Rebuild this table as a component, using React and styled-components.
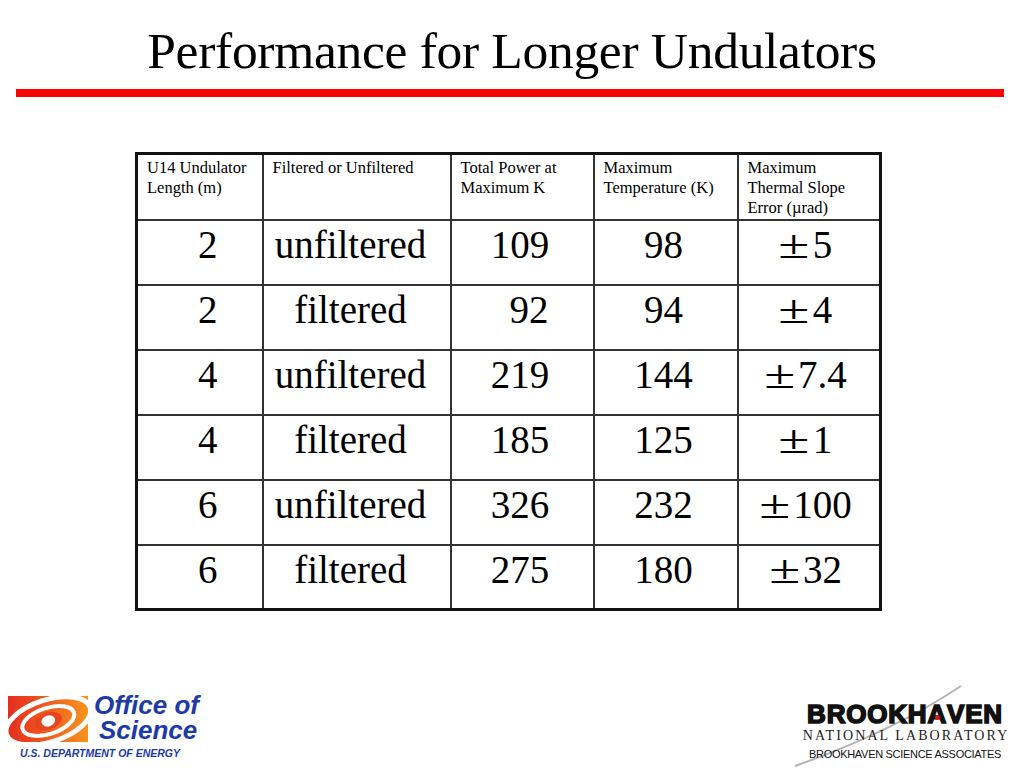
import React from "react";
import styled, { createGlobalStyle } from "styled-components";

const rows = [
  { len: "2", kind: "unfiltered", power: "109", temp: "98", slope: "5" },
  { len: "2", kind: "filtered", power: "92", temp: "94", slope: "4", pad: true },
  { len: "4", kind: "unfiltered", power: "219", temp: "144", slope: "7.4" },
  { len: "4", kind: "filtered", power: "185", temp: "125", slope: "1" },
  { len: "6", kind: "unfiltered", power: "326", temp: "232", slope: "100" },
  { len: "6", kind: "filtered", power: "275", temp: "180", slope: "32" },
];

const GlobalStyle = createGlobalStyle`
  html, body {
    margin: 0;
    padding: 0;
    background: #fff;
  }
  body {
    font-family: "Liberation Serif", "Times New Roman", serif;
    color: #000;
  }
`;

function DoeLogo() {
  return (
    <svg width="80" height="46" viewBox="0 0 80 46">
      <defs>
        <linearGradient id="doeGrad" x1="0" y1="0" x2="1" y2="0">
          <stop offset="0" stopColor="#e42d1f" />
          <stop offset="0.55" stopColor="#f0621e" />
          <stop offset="1" stopColor="#f7941d" />
        </linearGradient>
        <clipPath id="doeClip">
          <rect x="0" y="0" width="80" height="46" />
        </clipPath>
      </defs>
      <rect x="0" y="0" width="80" height="46" fill="url(#doeGrad)" />
      <g clipPath="url(#doeClip)">
        <g transform="rotate(-18 40 24)">
          <ellipse cx="40" cy="25" rx="44" ry="21" fill="none" stroke="#fff" strokeWidth="5" />
          <ellipse cx="40" cy="25" rx="27" ry="13" fill="none" stroke="#fff" strokeWidth="4" />
          <ellipse cx="40" cy="25" rx="14" ry="8.5" fill="#e8451f" />
          <ellipse cx="40" cy="25" rx="7" ry="5.5" fill="#fff" />
        </g>
      </g>
    </svg>
  );
}

function App() {
  return (
    <>
      <GlobalStyle />
      <Slide>
        <Title>Performance for Longer Undulators</Title>
        <Rule />
        <TableWrap>
          <DataTable>
            <colgroup>
              <col style={{ width: 126 }} />
              <col style={{ width: 188 }} />
              <col style={{ width: 143 }} />
              <col style={{ width: 144 }} />
              <col style={{ width: 143 }} />
            </colgroup>
            <thead>
              <tr>
                <HeadCell>U14 Undulator<br />Length (m)</HeadCell>
                <HeadCell>Filtered or Unfiltered</HeadCell>
                <HeadCell>Total Power at<br />Maximum K</HeadCell>
                <HeadCell>Maximum<br />Temperature (K)</HeadCell>
                <HeadCell>Maximum<br />Thermal Slope<br />Error (µrad)</HeadCell>
              </tr>
            </thead>
            <tbody>
              {rows.map((r, i) => (
                <tr key={i}>
                  <Cell $shift={8}>{r.len}</Cell>
                  <Cell $shift={-6}>{r.kind}</Cell>
                  <Cell $shift={r.pad ? 7 : -2}>{r.power}</Cell>
                  <Cell $shift={-2}>{r.temp}</Cell>
                  <Cell $shift={-3}>
                    <PlusMinus>±</PlusMinus>
                    {r.slope}
                  </Cell>
                </tr>
              ))}
            </tbody>
          </DataTable>
        </TableWrap>
        <Footer>
          <DoeBlock>
            <DoeTop>
              <DoeLogo />
              <DoeName>
                <span>Office of</span>
                <span>Science</span>
              </DoeName>
            </DoeTop>
            <DoeDept>U.S. DEPARTMENT OF ENERGY</DoeDept>
          </DoeBlock>
          <BnlBlock>
            <Swoosh width="220" height="84" viewBox="0 0 220 84">
              <path d="M1 82 Q 100 47 167 2" fill="none" stroke="#b3b3b3" strokeWidth="2" />
            </Swoosh>
            <BnlName>
              BROOKH<RedA>A<RedDot /></RedA>VEN
            </BnlName>
            <BnlLab>NATIONAL LABORATORY</BnlLab>
            <BnlAssoc>BROOKHAVEN SCIENCE ASSOCIATES</BnlAssoc>
          </BnlBlock>
        </Footer>
      </Slide>
    </>
  );
}

const Slide = styled.div`
  width: 1024px;
  height: 768px;
  display: flex;
  flex-direction: column;
  overflow: hidden;
`;

const Title = styled.h1`
  margin: 21px 0 0;
  height: 60px;
  font-family: "Liberation Serif", "Times New Roman", serif;
  font-weight: normal;
  font-size: 51.5px;
  line-height: 60px;
  letter-spacing: -0.3px;
  text-align: center;
`;

const Rule = styled.div`
  margin: 8px 20px 0 16px;
  height: 8px;
  background: #ff0000;
`;

const TableWrap = styled.div`
  margin-top: 55px;
  padding-left: 135px;
`;

const DataTable = styled.table`
  width: 744px;
  table-layout: fixed;
  border-collapse: collapse;
  border: 3px solid #111;
  font-family: "Liberation Serif", "Times New Roman", serif;
`;

const HeadCell = styled.th`
  height: 66px;
  box-sizing: border-box;
  padding: 3px 9px 0;
  border: 2px solid #333;
  vertical-align: top;
  text-align: left;
  font-weight: normal;
  font-size: 16.5px;
  line-height: 20px;
  white-space: nowrap;
`;

const Cell = styled.td`
  height: 65px;
  box-sizing: border-box;
  padding: 0 0 14px ${(p) => Math.max(p.$shift, 0) * 2}px;
  padding-right: ${(p) => Math.max(-p.$shift, 0) * 2}px;
  border: 2px solid #333;
  vertical-align: middle;
  text-align: center;
  font-size: 39px;
  line-height: 44px;
  white-space: nowrap;
`;

const PlusMinus = styled.span`
  display: inline-block;
  margin-right: 4px;
  transform: scaleX(1.45);
  transform-origin: center;
  padding: 0 4px;
`;

const Footer = styled.div`
  margin-top: auto;
  height: 84px;
  display: flex;
  justify-content: space-between;
  align-items: flex-end;
  padding: 0 12px 0 8px;
`;

const DoeBlock = styled.div`
  display: flex;
  flex-direction: column;
  padding-bottom: 9px;
`;

const DoeTop = styled.div`
  display: flex;
  align-items: flex-start;
  gap: 6px;
`;

const DoeName = styled.div`
  display: flex;
  flex-direction: column;
  gap: 1px;
  margin-top: -3px;
  font-family: "Liberation Sans", Arial, sans-serif;
  font-weight: bold;
  font-style: italic;
  font-size: 26px;
  line-height: 24px;
  color: #1d3aa8;

  span:last-child {
    padding-left: 5px;
  }
`;

const DoeDept = styled.div`
  margin: 5px 0 0 12px;
  font-family: "Liberation Sans", Arial, sans-serif;
  font-weight: bold;
  font-style: italic;
  font-size: 10.5px;
  line-height: 12px;
  color: #1d3aa8;
  white-space: nowrap;
`;

const BnlBlock = styled.div`
  position: relative;
  display: flex;
  flex-direction: column;
  align-items: center;
  width: 214px;
  padding-bottom: 7px;
`;

const Swoosh = styled.svg`
  position: absolute;
  left: -4px;
  top: -16px;
  z-index: 0;
`;

const BnlName = styled.div`
  position: relative;
  z-index: 1;
  font-family: "Liberation Sans", Arial, sans-serif;
  font-weight: 900;
  font-size: 26px;
  line-height: 28px;
  letter-spacing: 0.8px;
  color: #111;
  -webkit-text-stroke: 1.6px #111;
  white-space: nowrap;
`;

const RedA = styled.span`
  position: relative;
`;

const RedDot = styled.span`
  position: absolute;
  left: 8px;
  top: 16px;
  width: 5px;
  height: 5px;
  border-radius: 50%;
  background: #e0141b;
`;

const BnlLab = styled.div`
  position: relative;
  z-index: 1;
  font-family: "Liberation Serif", "Times New Roman", serif;
  font-size: 14px;
  line-height: 16px;
  letter-spacing: 2.1px;
  margin-right: -2.1px;
  color: #222;
  white-space: nowrap;
`;

const BnlAssoc = styled.div`
  position: relative;
  z-index: 1;
  margin-top: 4px;
  font-family: "Liberation Sans", Arial, sans-serif;
  font-size: 11px;
  line-height: 13px;
  letter-spacing: -0.3px;
  color: #111;
  white-space: nowrap;
`;

export default App;
